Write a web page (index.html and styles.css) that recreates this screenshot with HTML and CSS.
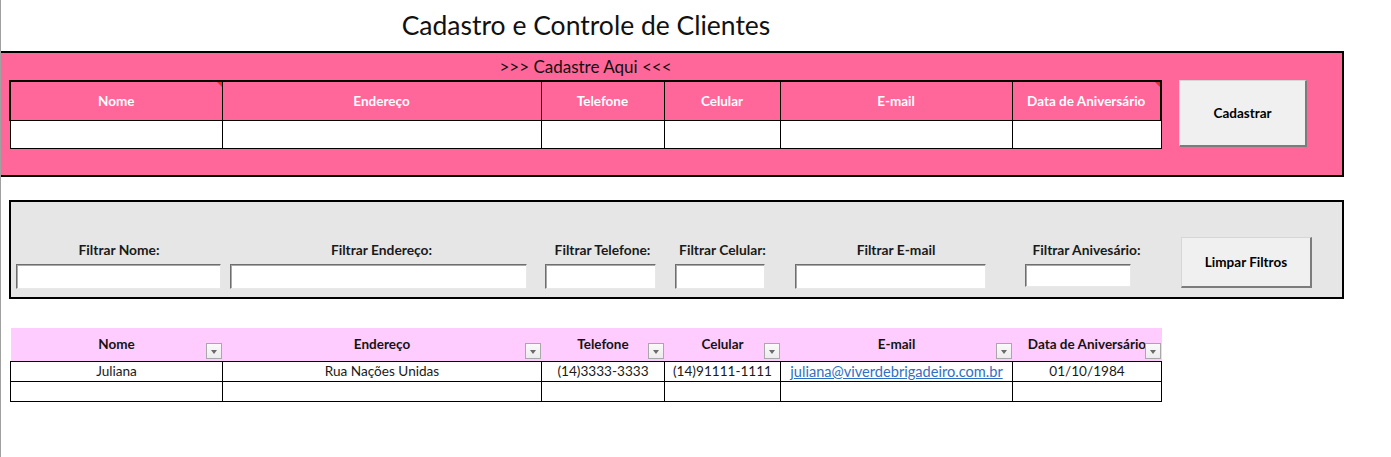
FILE: index.html
```html
<!DOCTYPE html>
<html lang="pt-BR">
<head>
<meta charset="utf-8">
<title>Cadastro e Controle de Clientes</title>
<link rel="stylesheet" href="styles.css">
</head>
<body>
<div class="sheet">
  <div class="title-row">
    <h1 class="title">Cadastro e Controle de Clientes</h1>
  </div>

  <section class="cadastro">
    <div class="cadastro-caption">&gt;&gt;&gt; Cadastre Aqui &lt;&lt;&lt;</div>
    <div class="cadastro-body">
      <table class="grid form-table">
        <colgroup>
          <col class="c-nome"><col class="c-end"><col class="c-tel"><col class="c-cel"><col class="c-mail"><col class="c-data">
        </colgroup>
        <thead>
          <tr>
            <th class="has-note">Nome<span class="note"></span></th>
            <th>Endereço</th>
            <th>Telefone</th>
            <th>Celular</th>
            <th>E-mail</th>
            <th class="has-note">Data de Aniversário<span class="note"></span></th>
          </tr>
        </thead>
        <tbody>
          <tr><td></td><td></td><td></td><td></td><td></td><td></td></tr>
        </tbody>
      </table>
      <button class="btn btn-cadastrar" type="button">Cadastrar</button>
    </div>
  </section>

  <section class="filtros">
    <div class="filter f-nome"><label>Filtrar Nome:</label><input type="text"></div>
    <div class="filter f-end"><label>Filtrar Endereço:</label><input type="text"></div>
    <div class="filter f-tel"><label>Filtrar Telefone:</label><input type="text"></div>
    <div class="filter f-cel"><label>Filtrar Celular:</label><input type="text"></div>
    <div class="filter f-mail"><label>Filtrar E-mail</label><input type="text"></div>
    <div class="filter f-data"><label>Filtrar Anivesário:</label><input type="text"></div>
    <button class="btn btn-limpar" type="button">Limpar Filtros</button>
  </section>

  <table class="grid list-table">
    <colgroup>
      <col class="c-nome"><col class="c-end"><col class="c-tel"><col class="c-cel"><col class="c-mail"><col class="c-data">
    </colgroup>
    <thead>
      <tr>
        <th>Nome<span class="dd"></span></th>
        <th>Endereço<span class="dd"></span></th>
        <th>Telefone<span class="dd"></span></th>
        <th>Celular<span class="dd"></span></th>
        <th>E-mail<span class="dd"></span></th>
        <th>Data de Aniversário<span class="dd"></span></th>
      </tr>
    </thead>
    <tbody>
      <tr>
        <td>Juliana</td>
        <td>Rua Nações Unidas</td>
        <td>(14)3333-3333</td>
        <td>(14)91111-1111</td>
        <td><a class="mail" href="#">juliana@viverdebrigadeiro.com.br</a></td>
        <td>01/10/1984</td>
      </tr>
      <tr><td></td><td></td><td></td><td></td><td></td><td></td></tr>
    </tbody>
  </table>
</div>
</body>
</html>
```

FILE: styles.css
```css
* { box-sizing: border-box; }

html, body {
  margin: 0;
  padding: 0;
  background: #ffffff;
}

body {
  font-family: Lato, "Open Sans", sans-serif;
  font-size: 13px;
  color: #1a1a1a;
}

.sheet {
  border-left: 1px solid #a0a0a0;
  min-height: 457px;
}

/* Title */
.title-row {
  width: 1161px;
  padding-left: 9px;
  height: 51px;
}
.title {
  margin: 0;
  padding-top: 8px;
  text-align: center;
  font-weight: 400;
  font-size: 26.5px;
  line-height: 34px;
  color: #111;
}

/* Pink cadastro area */
.cadastro {
  width: 1343px;
  height: 126px;
  background: #ff6699;
  border-top: 2px solid #000;
  border-right: 2px solid #000;
  border-bottom: 2px solid #000;
  padding-left: 8px;
}
.cadastro-caption {
  width: 1153px;
  height: 27px;
  line-height: 28px;
  text-align: center;
  font-size: 17px;
  color: #111;
}
.cadastro-body {
  display: flex;
  align-items: flex-start;
  gap: 17px;
}

.grid {
  border-collapse: collapse;
  table-layout: fixed;
  width: 1151px;
}
.c-nome { width: 212px; }
.c-end  { width: 319px; }
.c-tel  { width: 123px; }
.c-cel  { width: 116px; }
.c-mail { width: 232px; }
.c-data { width: 149px; }

.form-table th {
  height: 39px;
  padding: 0;
  background: #ff6699;
  color: #ffffff;
  font-weight: 700;
  font-size: 13.5px;
  text-align: center;
  border: 1px solid #000;
  border-top: 2px solid #000;
  position: relative;
}
.form-table th:first-child { border-left: 2px solid #000; }
.form-table th:last-child { border-right: 2px solid #000; }
.form-table td {
  height: 28px;
  padding: 0;
  background: #ffffff;
  border: 1px solid #000;
}

.note {
  position: absolute;
  top: 0;
  right: 0;
  width: 0;
  height: 0;
  border-top: 5px solid #e8302a;
  border-left: 5px solid transparent;
}

.btn {
  font-family: Lato, "Open Sans", sans-serif;
  font-weight: 700;
  font-size: 13.5px;
  color: #000;
  background: #f0f0f0;
  border-style: solid;
  border-width: 1px 2px 2px 1px;
  border-color: #d6d6d6 #7c7c7c #7c7c7c #d6d6d6;
  padding: 0;
  cursor: pointer;
}
.btn-cadastrar {
  width: 128px;
  height: 67px;
}

/* Filters */
.filtros {
  margin: 23px 0 0 8px;
  width: 1335px;
  height: 99px;
  border: 2px solid #000;
  background: #e6e6e6;
  display: flex;
  align-items: flex-end;
  padding: 0 0 8px 5px;
}
.filter {
  display: flex;
  flex-direction: column;
  align-items: center;
  flex: none;
}
.filter label {
  white-space: nowrap;
  font-weight: 700;
  font-size: 13.8px;
  line-height: 16px;
  color: #1a1a1a;
  margin-bottom: 6px;
}
.filter input {
  width: 100%;
  height: 25px;
  background: #fff;
  border: 1px solid;
  border-color: #6e6e6e #e8e8e8 #e8e8e8 #6e6e6e;
  box-shadow: inset 1px 1px 0 #a9a9a9;
  padding: 0 3px;
  font-family: inherit;
  outline: none;
}
.f-nome { width: 205px; }
.f-nome label { padding-left: 1px; }
.f-end { margin-left: 9px; width: 297px; }
.f-end label { padding-left: 6px; }
.f-tel { margin-left: 18px; width: 111px; }
.f-tel label { padding-left: 4px; }
.f-cel { margin-left: 19px; width: 90px; }
.f-cel label { padding-left: 5px; }
.f-mail { margin-left: 30px; width: 191px; }
.f-mail label { padding-left: 11px; }
.f-data { margin-left: 39px; width: 106px; }
.f-data input { height: 23px; margin-bottom: 2px; }
.f-data label { padding-left: 17px; }
.btn-limpar {
  margin-left: 50px;
  width: 131px;
  height: 51px;
  margin-bottom: 1px;
}

/* List table */
.list-table {
  margin: 29px 0 0 9px;
}
.list-table th {
  height: 33px;
  padding: 0 0 1px;
  background: #ffccff;
  font-weight: 700;
  font-size: 13.5px;
  color: #141414;
  text-align: center;
  white-space: nowrap;
  overflow: hidden;
  border-bottom: 1px solid #000;
  position: relative;
}
.list-table td {
  height: 20px;
  padding: 0;
  font-size: 13.6px;
  text-align: center;
  border: 1px solid #000;
  color: #1a1a1a;
  white-space: nowrap;
  overflow: hidden;
}
.mail {
  color: #2f6fc4;
  text-decoration: underline;
  font-size: 14.6px;
}

.dd {
  position: absolute;
  right: 1px;
  bottom: 2px;
  width: 16px;
  height: 16px;
  background: linear-gradient(#fafafa, #ececec);
  border: 1px solid #a8a8a8;
}
.dd::after {
  content: "";
  position: absolute;
  left: 4px;
  top: 6px;
  border-top: 4px solid #6a6a6a;
  border-left: 3.5px solid transparent;
  border-right: 3.5px solid transparent;
}
```
